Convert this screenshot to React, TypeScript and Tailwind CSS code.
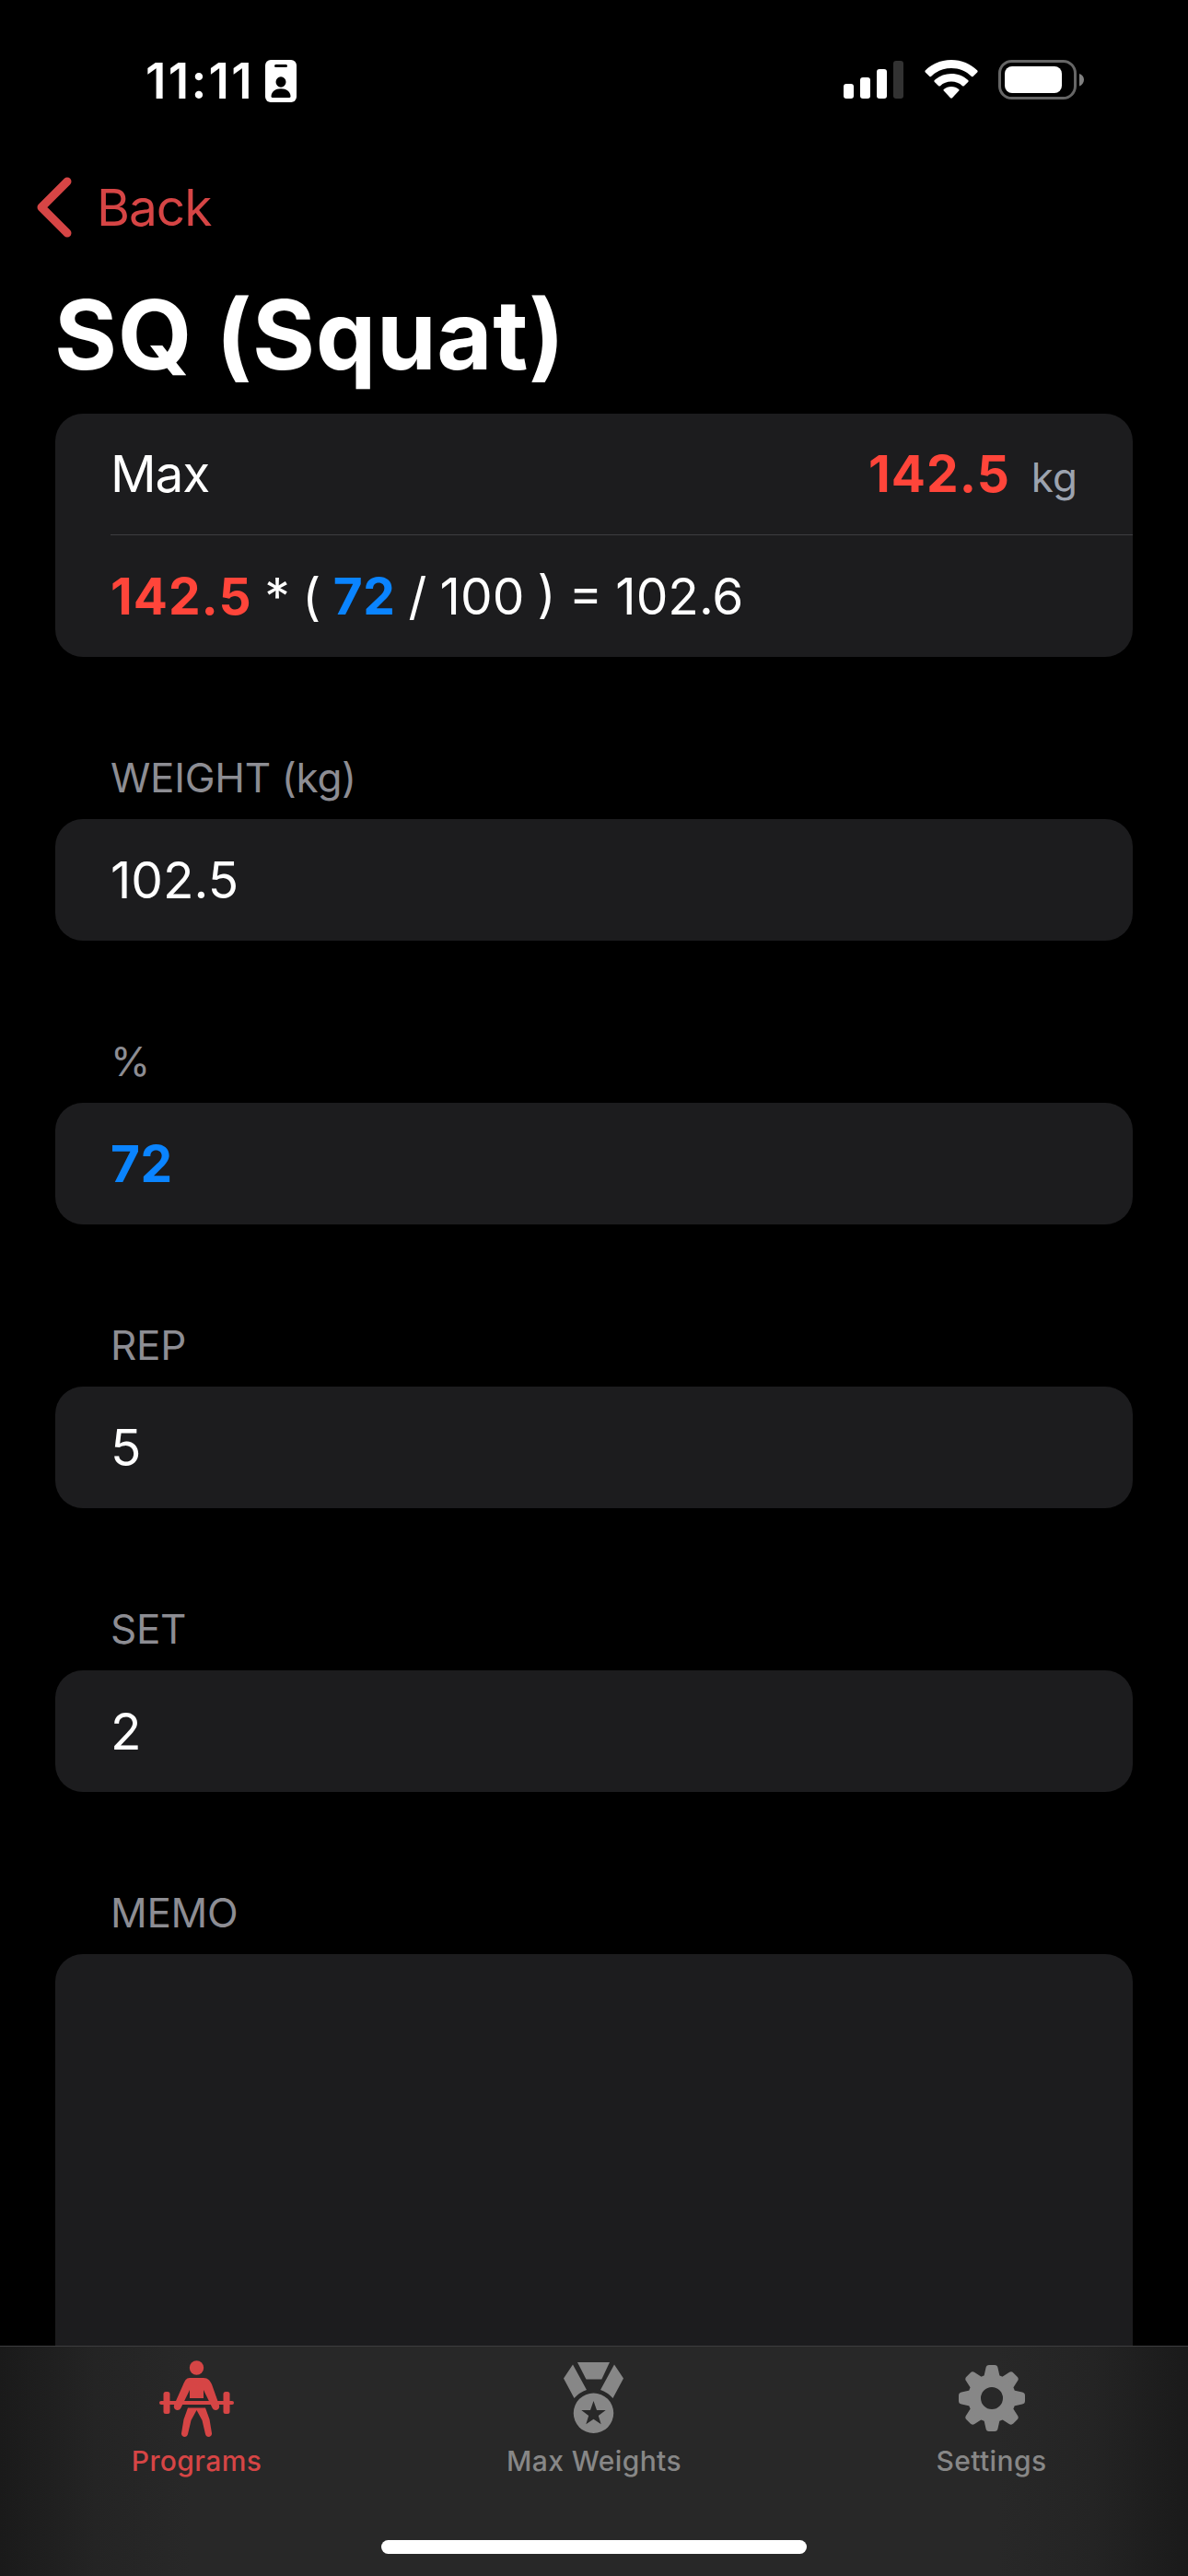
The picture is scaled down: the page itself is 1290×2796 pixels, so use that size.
import React from 'react';
import clsx from 'clsx';

const SignalIcon = () => (
  <svg width="66" height="42" viewBox="0 0 66 42" fill="#fff">
    <rect x="0" y="25" width="11" height="16" rx="3" />
    <rect x="18" y="18" width="11" height="23" rx="3" />
    <rect x="36" y="9" width="11" height="32" rx="3" />
    <rect x="54" y="0" width="11" height="41" rx="3" fill="#323232" />
  </svg>
);

const WifiIcon = () => (
  <svg width="58" height="42" viewBox="0 0 58 42" fill="#fff">
    <path d="M29 0C40 0 50 4.200 57.300 11.600Q58 12.600 57.200 13.500L52.600 18Q51.900 18.600 51 17.900C45 12.200 37.500 9 29 9S13 12.200 7 17.900Q6.100 18.600 5.400 18L.8 13.500Q0 12.600.7 11.600C8 4.200 18 0 29 0Z" />
    <path d="M29 15C36 15 42.300 17.600 47.200 22Q48.100 23 47.200 24L42.800 28.200Q42 28.900 41 28.200C37.700 25.200 33.600 23.600 29 23.600S20.300 25.200 17 28.200Q16 28.900 15.200 28.200L10.800 24Q9.900 23 10.800 22C15.700 17.600 22 15 29 15Z" />
    <path d="M29 29C32.200 29 35 30.100 37.200 31.900Q38 32.700 37.200 33.600L30 41.300Q29 42.200 28 41.300L20.800 33.600Q20 32.700 20.800 31.900C23 30.100 25.800 29 29 29Z" />
  </svg>
);

const BatteryIcon = () => (
  <svg width="94" height="43" viewBox="0 0 94 43">
    <rect x="1.500" y="1.500" width="82" height="40" rx="13" fill="none" stroke="#666" strokeWidth="3" />
    <rect x="7" y="7" width="62" height="29" rx="8" fill="#fff" />
    <path d="M88 15C91 16 93 18.500 93 21.500S91 27.500 88 28.500Z" fill="#808080" />
  </svg>
);

const BadgeIcon = () => (
  <svg width="34" height="46" viewBox="0 0 34 46">
    <rect width="34" height="46" rx="6" fill="#fff" />
    <rect x="10" y="5" width="14" height="3" rx="1.500" fill="#000" />
    <ellipse cx="17" cy="24" rx="5.500" ry="5.700" fill="#000" />
    <path d="M6.500 39.500C6.500 34.500 11 31.200 17 31.200S27.500 34.500 27.500 39.500Q27.500 41 26 41H8Q6.500 41 6.500 39.500Z" fill="#000" />
  </svg>
);

const LifterIcon = () => (
  <svg width="82" height="84" viewBox="0 0 82 84" fill="currentColor">
    <circle cx="40.500" cy="8" r="7.700" />
    <path d="M33 19H48C53 19 55 22 57 26L65 48.500C66.500 54 59.500 56 57.500 51.500L48 32V41H33V32L23.500 51.500C21.500 56 14.500 54 16 48.500L26 26C28 22 29 19 33 19Z" />
    <rect x="0" y="44" width="81" height="4" rx="2" />
    <rect x="4.500" y="34" width="7" height="24" rx="2.500" />
    <rect x="69.500" y="34" width="7" height="24" rx="2.500" />
    <path d="M31 51.500H50L54.500 64L57 79C57.500 83.500 51 84.500 50 80L46.500 65L40.500 54L34.500 65L31 80C30 84.500 23.500 83.500 24 79L26.500 64Z" />
  </svg>
);

const MedalIcon = () => (
  <svg width="66" height="78" viewBox="0 0 66 78" fill="currentColor">
    <path d="M15 0H50L41.300 18.500H24.500Z" />
    <path d="M10 2.500L25 30Q17.500 32.500 11.500 39L0 17.500Z" />
    <path d="M55 2.500L65 17.500L53.500 39Q47.500 32.500 40 30Z" />
    <path
      fillRule="evenodd"
      d="M32.500 33.500A21.750 21.750 0 1 1 32.500 77A21.750 21.750 0 1 1 32.500 33.500ZM32.500 42L29 52H19.300L27.200 58L24.300 67.300L32.500 61.800L40.700 67.300L37.800 58L45.700 52H36Z"
    />
  </svg>
);

const TOOTH = 'M29.500 3Q30 0 33 0H39Q42 0 42.500 3L44.500 12H27.500Z';

const GearIcon = () => (
  <svg width="72" height="72" viewBox="0 0 72 72" fill="currentColor">
    {[0, 45, 90, 135, 180, 225, 270, 315].map((angle) => (
      <path key={angle} d={TOOTH} transform={`rotate(${angle} 36 36)`} />
    ))}
    <circle cx="36" cy="36" r="19" fill="none" stroke="currentColor" strokeWidth="14" />
  </svg>
);

const fields = [
  { label: 'WEIGHT (kg)', value: '102.5' },
  { label: '%', value: '72', highlight: true },
  { label: 'REP', value: '5' },
  { label: 'SET', value: '2' },
];

const tabs = [
  { name: 'Programs', icon: <LifterIcon />, active: true },
  { name: 'Max Weights', icon: <MedalIcon /> },
  { name: 'Settings', icon: <GearIcon /> },
];

const SectionLabel = ({ children }: { children: React.ReactNode }) => (
  <div className="flex h-[176px] items-end px-[60px] pb-[20px] text-[44px] leading-[50px] tracking-[-0.3px] text-[#8d8d93]">
    {children}
  </div>
);

const Field = ({ label, value, highlight }: { label: string; value: string; highlight?: boolean }) => (
  <section>
    <SectionLabel>{label}</SectionLabel>
    <div
      className={clsx(
        'flex h-[132px] items-center rounded-[30px] bg-[#1c1c1e] px-[60px]',
        highlight ? 'font-bold tracking-[0.5px] text-[#0a84ff]' : 'text-white'
      )}
    >
      {value}
    </div>
  </section>
);

export default function App() {
  return (
    <div className="flex h-[2796px] w-[1290px] flex-col overflow-hidden bg-black font-['Inter','Liberation_Sans',sans-serif] text-[55px] leading-none text-white">
      <div className="flex h-[177px] shrink-0 items-start justify-between pr-[112px] pl-[158px]">
        <div className="flex pt-[65px]">
          <span className="w-[130px] text-[53px] leading-[46px] font-semibold tracking-[2.3px]">11:11</span>
          <BadgeIcon />
        </div>
        <div className="flex pt-[65px]">
          <div className="w-[88px] pt-[1px]"><SignalIcon /></div>
          <div className="w-[80px]"><WifiIcon /></div>
          <BatteryIcon />
        </div>
      </div>

      <nav className="flex h-[96px] shrink-0 items-center pl-[39px] text-[#d64545]">
        <svg width="39" height="66" viewBox="0 0 39 66" fill="none">
          <path d="M34 5L6 33L34 61" stroke="currentColor" strokeWidth="9" strokeLinecap="round" strokeLinejoin="round" />
        </svg>
        <span className="ml-[27px] tracking-[-1px]">Back</span>
      </nav>

      <h1 className="h-[176px] shrink-0 pt-[38px] pl-[59px] text-[104px] leading-[104px] font-bold tracking-[0.6px]">SQ (Squat)</h1>

      <main className="min-h-0 flex-1 overflow-hidden px-[60px]">
        <div className="rounded-[30px] bg-[#1c1c1e]">
          <div className="ml-[60px] flex h-[132px] items-center justify-between border-b border-[#3d3d41] pr-[60px]">
            <span className="tracking-[-1.2px]">Max</span>
            <div className="flex items-baseline">
              <span className="font-bold tracking-[1px] text-[#ff453a]">142.5</span>
              <span className="ml-[23px] text-[44px] text-[#9ca3af]">kg</span>
            </div>
          </div>
          <div className="flex h-[132px] items-center pl-[60px] whitespace-pre">
            <span className="font-bold tracking-[1px] text-[#ff453a]">142.5</span>
            <span className="[word-spacing:-2px]"> * ( </span>
            <span className="font-bold tracking-[0.5px] text-[#0a84ff]">72</span>
            <span className="[word-spacing:-1.3px]"> / 100 ) = 102.6</span>
          </div>
        </div>

        {fields.map((field) => (
          <Field key={field.label} {...field} />
        ))}

        <section>
          <SectionLabel>MEMO</SectionLabel>
          <div className="h-[500px] rounded-t-[30px] bg-[#1c1c1e]" />
        </section>
      </main>

      <footer className="flex h-[250px] shrink-0 flex-col items-center border-t border-[#3d3d3f] bg-[linear-gradient(to_right,#1a1a1a,#242424_8%,#282828_16%,#282828_84%,#242424_92%,#1a1a1a)]">
        <div className="grid w-full grid-cols-[427px_436px_427px]">
          {tabs.map((tab) => (
            <div key={tab.name} className={clsx('flex flex-col items-center', tab.active ? 'text-[#d64545]' : 'text-[#878787]')}>
              <div className={clsx('flex h-[106px] items-center', tab.active ? 'pt-[8px]' : 'pt-[6px]')}>{tab.icon}</div>
              <span className="text-[30px] leading-[36px] font-medium tracking-[0.4px]">{tab.name}</span>
            </div>
          ))}
        </div>
        <div className="mt-[68px] h-[15px] w-[462px] rounded-full bg-white" />
      </footer>
    </div>
  );
}
